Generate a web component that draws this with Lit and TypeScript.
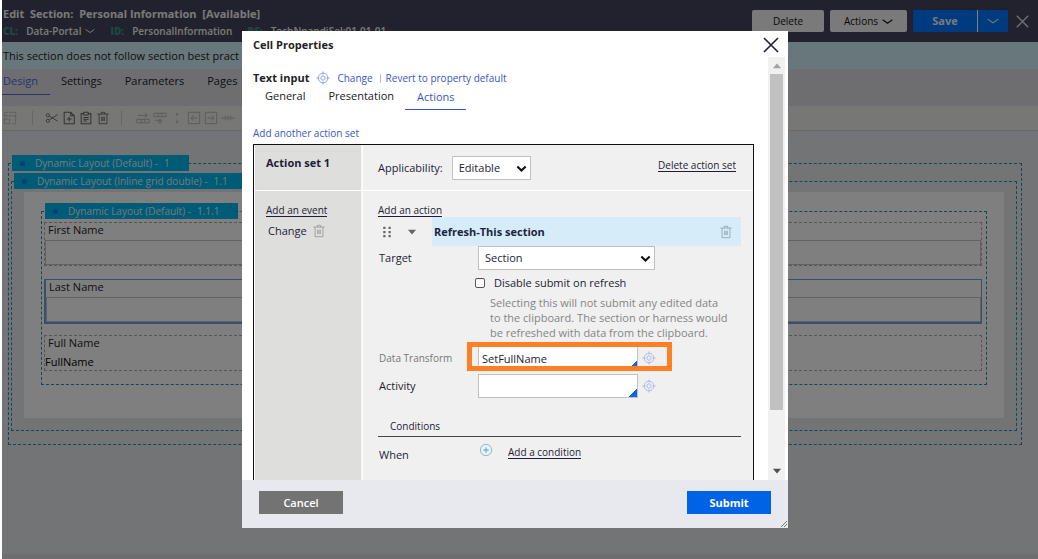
import { LitElement, html, css, svg } from "lit";
import { customElement } from "lit/decorators.js";

const base = css`
  * { box-sizing: border-box; }
  button, input, select { font: inherit; color: inherit; margin: 0; border-radius: 0; }
  button { border: 0; padding: 0; background: none; cursor: pointer; }
  svg { display: block; flex: none; fill: none; stroke: currentColor; }
  a { color: inherit; text-decoration: none; }
  h1, h2, p { margin: 0; font: inherit; }
`;

const glyphs: Record<string, unknown> = {
  frame: svg`<path d="M1.500 6V1.500H14.500V14.500H10M1.500 5.500H14M1.500 9H7.500V14.500H1.500Z" stroke-dasharray="4 1"/>`,
  cut: svg`<path d="M5 10L14.500 4M5 6L14.500 11.500"/><circle cx="3.300" cy="4.800" r="1.800"/><circle cx="3.300" cy="11.200" r="1.800"/>`,
  addPage: svg`<path d="M2.500 1.500H10L14 5.500V14.500H2.500ZM10 1.500V5.500H14M8.200 6.500V12M5.500 9.200H11" stroke-width="1.200"/>`,
  clipboard: svg`<path d="M5.500 3H2.500V14.500H13.500V3H10.500M5.500 1.500H10.500V4.500H5.500ZM5 7.500H11M5 9.500H11M5 11.500H9" stroke-width="1.200"/>`,
  trash: svg`<path d="M1.500 3.500H14.500M6 3.500V1.500H10V3.500M3.500 3.500V14.500H12.500V3.500M6.500 6.500V11.500M8 6.500V11.500M9.500 6.500V11.500"/>`,
  rowUp: svg`<path d="M1 13.500H15V9.500H1ZM6 9.500V13.500M10 9.500V13.500M2 5H13M10 2.500L13 5L10 7.500"/>`,
  rowDown: svg`<path d="M1 2.500H15V6.500H1ZM6 2.500V6.500M10 2.500V6.500M2 10.500H10M8 8.500V14M5.500 11.500L8 14L10.500 11.500"/>`,
  split: svg`<path d="M8 2V6M8 10V14M6.500 4L8 2.500L9.500 4M6.500 12L8 13.500L9.500 12"/>`,
  colLeft: svg`<path d="M1.500 1.500H14.500V14.500H1.500ZM12 8H4.500M7.500 5L4.500 8L7.500 11"/>`,
  colRight: svg`<path d="M1.500 1.500H14.500V14.500H1.500ZM4 8H11.500M8.500 5L11.500 8L8.500 11"/>`,
  merge: svg`<path d="M0 8H6M4 5.500L6.500 8L4 10.500M16 8H10M12 5.500L9.500 8L12 10.500M8 5V11"/>`,
  chevron: svg`<path d="M1 5.500L8 10.500L15 5.500" stroke-width="1.600"/>`,
  caret: svg`<path d="M2 5L8 11L14 5" stroke-width="3"/>`,
  close: svg`<path d="M1 1L15 15M15 1L1 15" stroke-width="1.600"/>`,
  target: svg`<circle cx="8" cy="8" r="5.500"/><circle cx="8" cy="8" r="2.500"/><path d="M8 .5V4M8 12V15.500M.5 8H4M12 8H15.500"/>`,
  plus: svg`<circle cx="8" cy="8" r="6.500"/><path d="M8 5V11M5 8H11" stroke-width="1.500"/>`,
  grip: svg`<path d="M3 2.500H6M10 2.500H13M3 8H6M10 8H13M3 13.500H6M10 13.500H13" stroke-width="3"/>`,
  down: svg`<path d="M1.500 4.500H14.500L8 12Z" fill="currentColor" stroke="none"/>`,
  up: svg`<path d="M1.500 11.500H14.500L8 4Z" fill="currentColor" stroke="none"/>`,
};
const icon = (name: string, size = 14) =>
  html`<svg width=${size} height=${size} viewBox="0 0 16 16" aria-hidden="true">${glyphs[name]}</svg>`;

@customElement("cell-dialog")
class CellDialog extends LitElement {
  static styles = [base, css`
    :host { display: flex; flex-direction: column; width: 546px; min-height: 0; background: #fff; color: #1d1d35; position: relative; }
    .head { display: flex; justify-content: space-between; align-items: center; height: 26px; padding: 2px 9px 0 11px; flex: none; }
    .head h2, .kind { font-weight: 700; color: #222; }
    .main { display: flex; flex: 1; min-height: 0; padding-right: 3px; }
    .scroll { flex: 1; overflow: hidden; padding: 12px 14px 0 11px; }
    .bar { width: 17px; background: #f1f1f1; display: flex; flex-direction: column; align-items: center; justify-content: space-between; padding: 4px 0; color: #505050; }
    .bar .faint { color: #a3a3a3; display: flex; }
    .thumb { width: 13px; height: 81%; margin: 3px 0 auto; background: #c1c1c1; }
    .line { display: flex; align-items: center; height: 18px; font-size: 10px; color: #3a55c8; }
    .kind { font-size: 11px; }
    .line .ic { margin: 0 7px; color: #8d98d8; }
    .sep { width: 1px; height: 9px; margin: 0 5px 0 7px; background: #bbb; }
    .tabs { display: flex; height: 23px; align-items: stretch; }
    .tabs button { padding: 0 11px 5px 12px; display: flex; align-items: center; color: #222; }
    .tabs .on { color: #3a55c8; border-bottom: 1px solid #3a55c8; padding-bottom: 2px; }
    .more { display: block; margin: 15px 0 3px; font-size: 10px; line-height: 16px; color: #3a55c8; }
    .set { display: grid; grid-template-columns: 108px 1fr; grid-template-rows: 46px 340px; border: 1px solid #111; background: #f0f0f0; }
    .set > * { border-left: 1px solid #fff; }
    .name, .events { background: #dededd; border-right: 1px solid #f5f5f2; }
    .name { padding: 10px 11px; font-weight: 700; }
    .name, .apply { border-bottom: 1px solid #fff; }
    .apply { display: flex; align-items: center; padding: 0 17px 0 15px; gap: 9px; }
    .apply a { margin: 0 0 4px auto; }
    .u { display: block; width: fit-content; font-size: 10px; line-height: 12px; border-bottom: 1px solid #1d1d35; }
    .events, .acts { padding: 13px 12px 0 15px; }
    .events { padding-left: 11px; }
    .ev { display: flex; align-items: center; gap: 5px; height: 28px; color: #222238; padding-left: 2px; }
    .ev svg { color: #9a9a9a; }
    .act { display: flex; align-items: center; height: 29px; color: #666; padding-left: 3px; }
    .act button { margin-left: 14px; }
    .act .title { margin-left: 15px; flex: 1; align-self: stretch; background: #d6edf9; color: #1d2340; font-weight: 700; display: flex; align-items: center; justify-content: space-between; padding: 0 8px 0 2px; }
    .title button { color: #8fa5b5; }
    .row { display: grid; grid-template-columns: 99px 1fr; align-items: center; height: 24px; padding-left: 1px; }
    .field { display: flex; align-items: center; gap: 4px; color: #a9b3ee; }
    .field button { display: flex; }
    select, .box { border: 1px solid #c0c0c4; background: #fff; color: #1d1d35; height: 24px; }
    .drop { position: relative; display: inline-flex; justify-self: start; }
    select { appearance: none; padding: 0 6px; width: 79px; }
    .wide select { width: 177px; }
    .drop svg { position: absolute; right: 4px; top: 7px; color: #111; pointer-events: none; }
    .check { display: flex; align-items: center; gap: 9px; height: 25px; padding-left: 97px; }
    .check input { width: 10px; height: 10px; appearance: none; border: 1px solid #555; border-radius: 2px; background: #fff; }
    .help { color: #858585; line-height: 15px; padding-left: 112px; }
    .box { width: 160px; padding: 0 3px; }
    .combo { display: flex; background: linear-gradient(135deg, transparent 50%, #1363e0 50%) right 1px bottom 1px / 8px 8px no-repeat, #fff; }
    .combo .box { background: none; }
    .mark { outline: 5px solid #ff7f27; outline-offset: -5px; z-index: 1; height: 29px; margin-left: -11px; padding: 3px 10px 0 11px; width: 205px; }
    .row.first { margin-top: 2px; height: 29px; }
    .first label { color: #777; font-size: 10px; padding-top: 3px; }
    .second { margin-top: 3px; }
    .cond { margin-top: 21px; padding: 0 12px 3px; font-size: 10px; line-height: 14px; border-bottom: 1px solid #444; }
    .when { display: flex; align-items: center; height: 36px; padding-left: 1px; }
    .when span { width: 100px; }
    .when svg { color: #6fb6d8; margin-bottom: 10px; }
    .when a { margin: 0 0 6px 15px; }
    .foot { display: flex; justify-content: space-between; align-items: flex-start; height: 48px; flex: none; padding: 11px 17px; background: #e8e9ef; position: relative; }
    .foot button { width: 84px; height: 23px; color: #fff; background: #737373; font-weight: 600; }
    .foot .go { background: #0063e5; font-weight: 700; }
    .grab { position: absolute; right: 0; bottom: 0; color: #777; }
  `];

  render() {
    return html`
      <div class="head"><h2>Cell Properties</h2><button aria-label="Close">${icon("close", 16)}</button></div>
      <div class="main">
        <div class="scroll">
          <div class="line">
            <span class="kind">Text input</span><span class="ic">${icon("target")}</span>
            <a href="#">Change</a><i class="sep"></i><a href="#">Revert to property default</a>
          </div>
          <div class="tabs" role="tablist">
            <button role="tab">General</button><button role="tab">Presentation</button><button role="tab" class="on" aria-selected="true">Actions</button>
          </div>
          <a class="more" href="#">Add another action set</a>
          <section class="set">
            <div class="name">Action set 1</div>
            <div class="apply">
              <label for="app">Applicability:</label>
              <span class="drop"><select id="app"><option>Editable</option></select>${icon("caret", 11)}</span>
              <a class="u" href="#">Delete action set</a>
            </div>
            <div class="events">
              <a class="u" href="#">Add an event</a>
              <div class="ev">Change <button aria-label="Remove event">${icon("trash")}</button></div>
            </div>
            <div class="acts">
              <a class="u" href="#">Add an action</a>
              <div class="act">
                ${icon("grip", 12)}<button aria-label="Collapse">${icon("down", 10)}</button>
                <div class="title">Refresh-This section<button aria-label="Remove action">${icon("trash")}</button></div>
              </div>
              <div class="row"><label for="target">Target</label>
                <span class="drop wide"><select id="target"><option>Section</option></select>${icon("caret", 11)}</span></div>
              <label class="check"><input type="checkbox">Disable submit on refresh</label>
              <p class="help">Selecting this will not submit any edited data<br>to the clipboard. The section or harness would<br>be refreshed with data from the clipboard.</p>
              <div class="row first"><label for="dt">Data Transform</label>
                <span class="field mark"><span class="combo"><input id="dt" class="box" value="SetFullName"></span><button aria-label="Open data transform">${icon("target")}</button></span></div>
              <div class="row second"><label for="ac">Activity</label>
                <span class="field"><span class="combo"><input id="ac" class="box"></span><button aria-label="Open activity">${icon("target")}</button></span></div>
              <div class="cond">Conditions</div>
              <div class="when"><span>When</span>${icon("plus")}<a class="u" href="#">Add a condition</a></div>
            </div>
          </section>
        </div>
        <div class="bar"><span class="faint">${icon("up", 10)}</span><div class="thumb"></div>${icon("down", 10)}</div>
      </div>
      <div class="foot">
        <button>Cancel</button><button class="go">Submit</button>
        <svg class="grab" width="8" height="8" viewBox="0 0 8 8"><path d="M1 7L7 1M4 7L7 4"/></svg>
      </div>`;
  }
}

@customElement("app-root")
class AppRoot extends LitElement {
  static styles = [base, css`
    :host { display: block; min-height: 100vh; padding-left: 2px; position: relative; background: #fff; font: 11px/16px "Open Sans", sans-serif; }
    .page { min-height: 100vh; background: #e7e8ec; color: #222; border-bottom: 5px solid #dcdde2; }
    .top { display: flex; justify-content: space-between; height: 42px; padding: 6px 8px 0 1px; background: #44445c; color: #f4f4f4; }
    .top h1 { font-weight: 700; white-space: pre; }
    .meta { display: flex; align-items: center; font-size: 10px; font-weight: 600; line-height: 16px; padding-top: 1px; }
    .meta b { color: #3f8f85; margin-right: 8px; }
    .meta span { margin-right: 15px; display: flex; align-items: center; gap: 4px; }
    .tools { display: flex; height: 22px; margin-top: 4px; gap: 6px; font-size: 10px; }
    .tools button { background: #f4f4f6; color: #111; border-radius: 2px; display: flex; align-items: center; justify-content: center; gap: 4px; width: 72px; }
    .tools .wide { width: 77px; }
    .tools .pair { display: flex; gap: 1px; background: #fff; }
    .tools .pair button { background: #0076ff; color: #f4f4f6; border-radius: 0; width: 64px; font-weight: 700; font-size: 11px; }
    .tools .pair .arrow { width: 30px; }
    .tools .x { background: none; color: #e4e4ea; width: 16px; }
    .warn { height: 27px; padding: 6px 1px; background: #d0eef8; white-space: nowrap; overflow: hidden; }
    .tabs { display: flex; height: 37px; padding-bottom: 11px; background: #dddde2; }
    .tabs button { padding: 0 12px 2px 11px; color: #222; border-bottom: 1px solid transparent; }
    .tabs .on { padding-left: 1px; color: #4f66e8; border-color: #4f66e8; }
    .icons { display: flex; align-items: center; gap: 3px; height: 25px; padding: 0 1px; background: #efefeb; border-bottom: 1px solid #d0d0d4; color: #b0b0b0; }
    .icons .dark { color: #666; }
    .icons i { width: 1px; height: 14px; margin: 0 11px 0 8px; background: #ccc; }
    .icons svg + i { margin: 0 9px 0 12px; }
    .canvas { padding: 32px 16px 0 6px; }
    .dash { border: 1px dashed #2090b0; position: relative; }
    .d1 { padding: 17px 4px 13px 2px; }
    .d2 { padding: 10px 12px 12px; }
    .sheet { background: #fff; padding: 19px 17px 33px; }
    .d3 { padding: 10px 4px 13px 2px; }
    .tag { position: absolute; top: -9px; left: 3px; height: 16px; background: #00b6ec; color: #e4f4fa; font-size: 10px; line-height: 16px; padding: 0 19px 0 8px; display: flex; align-items: center; white-space: nowrap; }
    .tag::before { content: ""; width: 5px; height: 5px; border-radius: 50%; background: #0080e0; margin-right: 10px; }
    .tag b { margin-left: 6px; font-weight: inherit; }
    .d2 > .tag { left: 2px; padding-right: 32px; }
    .cell { border: 1px dashed #b0a8bc; height: 44px; margin-bottom: 13px; display: flex; flex-direction: column; justify-content: space-between; }
    .cell label, .cell span { padding-left: 3px; line-height: 14px; }
    .cell input { width: 100%; height: 25px; background: #fff; border: 1px solid #c4c4c8; }
    .cell.sel { border: 1px solid #6fa0e0; border-width: 1px 1px 2px 2px; height: 45px; margin-bottom: 11px; }
    .cell:last-child { height: 36px; margin: 0; padding-bottom: 1px; }
    .cell .val { padding: 0; color: #000; }
    .veil { position: absolute; inset: 0 0 0 2px; background: rgba(0, 0, 0, .5); display: flex; justify-content: center; align-items: stretch; padding: 31px 10px 31px 0; }
    .veil cell-dialog { flex: none; max-width: 100%; }
  `];

  render() {
    return html`
      <main class="page">
        <header class="top">
          <div>
            <h1>Edit  Section:  Personal Information  [Available]</h1>
            <div class="meta"><b>CL:</b><span>Data-Portal ${icon("chevron", 10)}</span><b>ID:</b><span>PersonalInformation</span><b>RS:</b><span>TechNpandiSel:01-01-01</span></div>
          </div>
          <div class="tools">
            <button>Delete</button><button class="wide">Actions ${icon("chevron", 11)}</button>
            <div class="pair"><button>Save</button><button class="arrow" aria-label="More save options">${icon("chevron", 12)}</button></div>
            <button class="x" aria-label="Close">${icon("close", 13)}</button>
          </div>
        </header>
        <div class="warn">This section does not follow section best pract</div>
        <nav class="tabs"><button class="on">Design</button><button>Settings</button><button>Parameters</button><button>Pages</button></nav>
        <div class="icons">
          ${icon("frame")}<i></i>
          ${["cut", "addPage", "clipboard", "trash"].map((n) => html`<span class="dark">${icon(n)}</span>`)}<i></i>
          ${["rowUp", "rowDown", "split", "colLeft", "colRight", "merge"].map((n) => icon(n))}
        </div>
        <div class="canvas">
          <div class="dash d1"><div class="tag">Dynamic Layout (Default) - <b>1</b></div>
            <div class="dash d2"><div class="tag">Dynamic Layout (Inline grid double) - <b>1.1</b></div>
              <div class="sheet">
                <div class="dash d3"><div class="tag">Dynamic Layout (Default) - <b>1.1.1</b></div>
                  <div class="cell"><label for="fn">First Name</label><input id="fn"></div>
                  <div class="cell sel"><label for="ln">Last Name</label><input id="ln"></div>
                  <div class="cell"><span>Full Name</span><span class="val">FullName</span></div>
                </div>
              </div>
            </div>
          </div>
        </div>
      </main>
      <div class="veil"><cell-dialog role="dialog" aria-label="Cell Properties"></cell-dialog></div>`;
  }
}
